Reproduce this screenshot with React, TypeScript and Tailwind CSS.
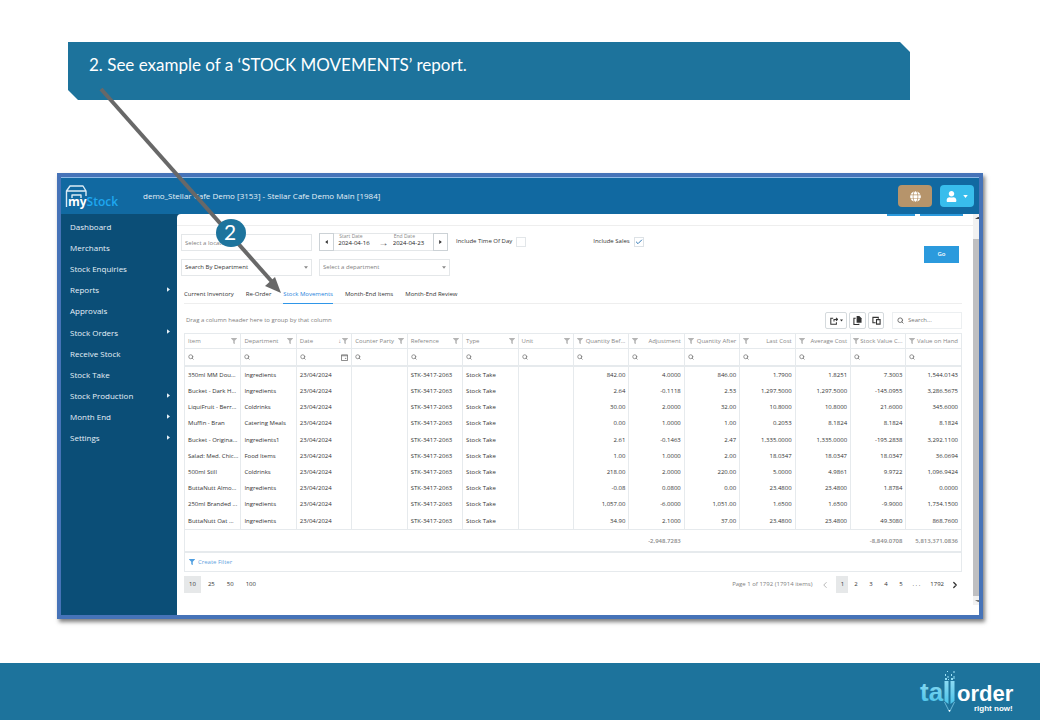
import type { ReactNode } from 'react';
import clsx from 'clsx';
import { FaFilter, FaGlobe, FaUser } from 'react-icons/fa';
import { Check, ChevronLeft, ChevronRight, Search } from 'lucide-react';

interface MenuItem {
  label: string;
  hasChildren?: boolean;
}

const menu: MenuItem[] = [
  { label: 'Dashboard' },
  { label: 'Merchants' },
  { label: 'Stock Enquiries' },
  { label: 'Reports', hasChildren: true },
  { label: 'Approvals' },
  { label: 'Stock Orders', hasChildren: true },
  { label: 'Receive Stock' },
  { label: 'Stock Take' },
  { label: 'Stock Production', hasChildren: true },
  { label: 'Month End', hasChildren: true },
  { label: 'Settings', hasChildren: true },
];

const tabs = ['Current Inventory', 'Re-Order', 'Stock Movements', 'Month-End Items', 'Month-End Review'];

interface Column {
  title: string;
  numeric?: boolean;
  total?: string;
}

const columns: Column[] = [
  { title: 'Item' },
  { title: 'Department' },
  { title: 'Date' },
  { title: 'Counter Party' },
  { title: 'Reference' },
  { title: 'Type' },
  { title: 'Unit' },
  { title: 'Quantity Bef...', numeric: true },
  { title: 'Adjustment', numeric: true, total: '-2,948.7283' },
  { title: 'Quantity After', numeric: true },
  { title: 'Last Cost', numeric: true },
  { title: 'Average Cost', numeric: true },
  { title: 'Stock Value C...', numeric: true, total: '-8,849.0708' },
  { title: 'Value on Hand', numeric: true, total: '5,813,371.0836' },
];

// item, department, then the seven numeric columns
const movements = [
  ['350ml MM Dou...', 'Ingredients', '842.00', '4.0000', '846.00', '1.7900', '1.8251', '7.3003', '1,544.0143'],
  ['Bucket - Dark H...', 'Ingredients', '2.64', '-0.1118', '2.53', '1,297.5000', '1,297.5000', '-145.0955', '3,286.5675'],
  ['LiquiFruit - Berr...', 'Coldrinks', '30.00', '2.0000', '32.00', '10.8000', '10.8000', '21.6000', '345.6000'],
  ['Muffin - Bran', 'Catering Meals', '0.00', '1.0000', '1.00', '0.2053', '8.1824', '8.1824', '8.1824'],
  ['Bucket - Origina...', 'Ingredients1', '2.61', '-0.1463', '2.47', '1,335.0000', '1,335.0000', '-195.2838', '3,292.1100'],
  ['Salad: Med. Chic...', 'Food Items', '1.00', '1.0000', '2.00', '18.0347', '18.0347', '18.0347', '36.0694'],
  ['500ml Still', 'Coldrinks', '218.00', '2.0000', '220.00', '5.0000', '4.9861', '9.9722', '1,096.9424'],
  ['ButtaNutt Almo...', 'Ingredients', '-0.08', '0.0800', '0.00', '23.4800', '23.4800', '1.8784', '0.0000'],
  ['250ml Branded ...', 'Ingredients', '1,057.00', '-6.0000', '1,051.00', '1.6500', '1.6500', '-9.9000', '1,734.1500'],
  ['ButtaNutt Oat ...', 'Ingredients', '34.90', '2.1000', '37.00', '23.4800', '23.4800', '49.3080', '868.7600'],
];

const rows = movements.map(([item, department, ...numbers]) => [
  item,
  department,
  '23/04/2024',
  '',
  'STK-3417-2063',
  'Stock Take',
  '',
  ...numbers,
]);

function Caret({ className }: { className?: string }) {
  return (
    <svg viewBox="0 0 6 4" className={clsx('h-[3px]', className)} fill="currentColor" aria-hidden="true">
      <path d="M0 0h6L3 4z" />
    </svg>
  );
}

function SideCaret({ flip, className }: { flip?: boolean; className?: string }) {
  return (
    <svg viewBox="0 0 4 6" className={clsx('w-[3px]', className)} fill="currentColor" aria-hidden="true">
      <path d={flip ? 'M4 0v6L0 3z' : 'M0 0v6l4-3z'} />
    </svg>
  );
}

function MyStockLogo() {
  return (
    <svg viewBox="0 0 56 28" className="h-7 w-14" role="img" aria-label="myStock">
      <path
        d="M1.500 25V9L5 4h13l3 5v5M1.500 9H21M7 16v-3h9v3"
        fill="none"
        stroke="#dcebf5"
        strokeWidth="1.4"
        strokeLinejoin="round"
      />
      <text x="3" y="24" fontSize="12" fontWeight="700" fontFamily="Open Sans, sans-serif" fill="#ffffff">
        my
        <tspan fill="#1ea7f0" fontWeight="600">Stock</tspan>
      </text>
    </svg>
  );
}

function TallOrderLogo() {
  return (
    <svg viewBox="0 0 100 48" className="h-12 w-[100px]" role="img" aria-label="tallorder right now!">
      <defs>
        <linearGradient id="tall" gradientUnits="userSpaceOnUse" x1="0" y1="4" x2="0" y2="38">
          <stop offset="0" stopColor="#a5e4f7" />
          <stop offset="1" stopColor="#45c1e8" />
        </linearGradient>
      </defs>
      <g fontFamily="Liberation Sans, sans-serif" fontWeight="700">
        <text x="2" y="33" fontSize="26" fill="url(#tall)">ta</text>
        <text x="39" y="33" fontSize="22" fill="#ffffff">order</text>
        <text x="56" y="43" fontSize="8" fill="#ffffff">right now!</text>
      </g>
      <g fill="url(#tall)">
        <path d="M26.500 13h4v23l-4-3zM32.500 13h4v20l-4 3z" />
        <path d="M27 10h2v2h-2zM29.500 8h1v2h-1zM27 6h1v2h-1zM30 11h1v1h-1zM33 10h2v2h-2zM35.500 8h1v3h-1zM33 6h1v2h-1zM35.500 3h1v2h-1zM29 3h1v1h-1z" />
      </g>
      <path d="M26.500 34l5 10 5-10" fill="none" stroke="#7fc9e4" strokeWidth="0.8" />
      <path d="M30.500 42h2l-1 2z" fill="#ffffff" />
    </svg>
  );
}

function PickerSelect({ label, dark }: { label: string; dark?: boolean }) {
  return (
    <div className="relative w-[131px]">
      <select
        aria-label={label}
        className={clsx(
          'block h-[17px] w-full appearance-none border border-[#e4e7e9] bg-white px-[3px] text-[6px]',
          dark ? 'text-[#333]' : 'text-[#808080]',
        )}
      >
        <option>{label}</option>
      </select>
      <Caret className="pointer-events-none absolute top-[7px] right-1 w-1 text-[#8a8a8a]" />
    </div>
  );
}

function DateField({ id, label, value }: { id: string; label: string; value: string }) {
  return (
    <div className="flex w-9 flex-col">
      <label htmlFor={id} className="pl-px text-[5px] leading-[5px] whitespace-nowrap text-[#888]">
        {label}
      </label>
      <input id={id} defaultValue={value} className="h-[9px] w-full text-[6px] text-[#222]" />
    </div>
  );
}

function ToolButton({ label, className, children }: { label: string; className: string; children: ReactNode }) {
  return (
    <button
      type="button"
      aria-label={label}
      className={clsx(
        'flex h-[17px] items-center justify-center gap-0.5 rounded-[2px] border border-[#d5dadd] text-[#333]',
        className,
      )}
    >
      {children}
    </button>
  );
}

function AppHeader() {
  return (
    <header className="flex h-[37px] items-center border-t border-[#8cb9e6] bg-[#1169a1] pr-[5px] pl-1">
      <MyStockLogo />
      <h1 className="ml-[22px] flex-1 text-[8px] font-medium text-[#e6f0f7]">
        demo_Stellar Cafe Demo [3153] - Stellar Cafe Demo Main [1984]
      </h1>
      <button
        type="button"
        aria-label="Language"
        className="mr-2 flex h-[22px] w-[34px] items-center justify-center rounded-sm bg-[#b6946b] text-white"
      >
        <FaGlobe className="h-[11px] w-[11px]" />
      </button>
      <button
        type="button"
        aria-label="Account"
        className="flex h-[22px] w-[34px] items-center justify-center gap-1.5 rounded-sm bg-[#38bdec] text-white"
      >
        <FaUser className="h-[11px] w-[11px]" />
        <Caret className="w-[5px]" />
      </button>
    </header>
  );
}

function Sidebar() {
  return (
    <nav className="w-[116px] shrink-0 bg-[#0b4e77] pt-0.5">
      <ul className="flex h-[233px] flex-col">
        {menu.map((item) => (
          <li key={item.label} className="flex-1">
            <a href="#" className="flex h-full items-center justify-between pr-[7px] pl-[9px] text-[8px] font-medium text-[#e6f0f7]">
              {item.label}
              {item.hasChildren && <SideCaret className="mb-0.5 h-[5px]" />}
            </a>
          </li>
        ))}
      </ul>
    </nav>
  );
}

function Filters() {
  return (
    <form className="flex h-[52px] items-start border-t border-[#eeeeee] pt-1.5 pr-3.5 pl-1">
      <div className="flex flex-1 flex-col gap-2">
        <div className="flex items-center">
          <input
            aria-label="Location"
            placeholder="Select a location"
            className="mt-0.5 h-[17px] w-[131px] border border-[#e4e7e9] px-[3px] text-[6px] placeholder:text-[#808080]"
          />
          <div className="ml-[7px] flex h-[18px] w-[129px] justify-between border-y border-[#e4e7e9]">
            <button type="button" aria-label="Previous period" className="-my-px flex w-[15px] items-center justify-center border border-[#ccd2d6] text-[#333]">
              <SideCaret flip className="h-1" />
            </button>
            <DateField id="start-date" label="Start Date" value="2024-04-16" />
            <span className="self-center text-[10px] leading-none text-[#555]">→</span>
            <DateField id="end-date" label="End Date" value="2024-04-23" />
            <button type="button" aria-label="Next period" className="-my-px flex w-[15px] items-center justify-center border border-[#ccd2d6] text-[#333]">
              <SideCaret className="h-1" />
            </button>
          </div>
          <label className="ml-2 flex items-center gap-1 text-[6px] text-[#333]">
            Include Time Of Day
            <input type="checkbox" className="h-[10px] w-[10px] appearance-none border border-[#e2e6e9]" />
          </label>
          <label className="ml-[67px] flex items-center gap-1 text-[6px] text-[#333]">
            Include Sales
            <span className="grid">
              <input
                type="checkbox"
                defaultChecked
                className="col-start-1 row-start-1 h-[10px] w-[10px] appearance-none border border-[#dde2e6]"
              />
              <Check className="pointer-events-none col-start-1 row-start-1 h-[10px] w-[10px] p-px text-[#337ab7]" strokeWidth={3} />
            </span>
          </label>
        </div>
        <div className="flex gap-[7px]">
          <PickerSelect label="Search By Department" dark />
          <PickerSelect label="Select a department" />
        </div>
      </div>
      <button type="submit" className="mt-3.5 h-[17px] w-[35px] bg-[#2b9add] text-[6px] font-semibold text-white">
        Go
      </button>
    </form>
  );
}

function Tabs() {
  return (
    <div role="tablist" className="mt-2 mr-[11px] ml-[7px] flex h-[19px] gap-3 border-b border-[#eeeeee]">
      {tabs.map((tab) => (
        <button
          key={tab}
          type="button"
          role="tab"
          aria-selected={tab === 'Stock Movements'}
          className={clsx(
            '-mb-px border-b text-[6px]',
            tab === 'Stock Movements' ? 'border-[#2f96e8] text-[#1f83dc]' : 'border-transparent text-[#333]',
          )}
        >
          {tab}
        </button>
      ))}
    </div>
  );
}

function GridToolbar() {
  return (
    <div className="flex h-[29px] items-center pt-1">
      <p className="flex-1 pl-0.5 text-[6px] text-[#808080]">Drag a column header here to group by that column</p>
      <ToolButton label="Export" className="w-[22px]">
        <svg viewBox="0 0 10 10" className="h-2 w-2" fill="none" stroke="currentColor" strokeWidth="1.300" aria-hidden="true">
          <path d="M4 1.500H1v7.500h7V6.500M5 5.500V3h4M7.500 1l2 2-2 2" />
        </svg>
        <Caret className="w-[3px]" />
      </ToolButton>
      <ToolButton label="Expand all" className="ml-0.5 w-[17px]">
        <svg viewBox="0 0 10 10" className="h-[9px] w-[9px]" fill="currentColor" aria-hidden="true">
          <path d="M4 0h3l2.500 2.500V7.500H4z" />
          <path d="M3 2.500H1v7h5.500V8.500" fill="none" stroke="currentColor" strokeWidth="1.200" />
        </svg>
      </ToolButton>
      <ToolButton label="Column chooser" className="ml-0.5 w-4">
        <svg viewBox="0 0 10 10" className="h-[9px] w-[9px]" fill="none" stroke="currentColor" strokeWidth="1.200" aria-hidden="true">
          <path d="M4 7.500H1v-6h6V3M5 4h4v5H5z" />
        </svg>
      </ToolButton>
      <label className="ml-2 flex h-[17px] w-[70px] items-center gap-1 border border-[#eceff1] pl-1 text-[#666]">
        <Search className="h-[7px] w-[7px]" strokeWidth={3} />
        <input type="text" aria-label="Search" placeholder="Search..." className="w-12 text-[6px] placeholder:text-[#777]" />
      </label>
    </div>
  );
}

function StockTable() {
  return (
    <table className="w-full table-fixed border-separate border-spacing-0 border-x border-[#e6eaed] text-[6px] leading-[8px] text-[#333]">
      <thead>
        <tr>
          {columns.map((col, i) => (
            <th key={col.title} className={clsx('h-4 border-y border-[#e6eaed] px-[3px] py-0 font-normal text-[#888]', i > 0 && 'border-l')}>
              <div className={clsx('flex items-center justify-between gap-px whitespace-nowrap', col.numeric && 'flex-row-reverse')}>
                <span>{col.title}</span>
                <span className="flex items-center gap-px">
                  {col.title === 'Date' && <span>↓</span>}
                  <FaFilter className="h-[6px] w-[6px] text-[#b4b4b4]" />
                </span>
              </div>
            </th>
          ))}
        </tr>
        <tr>
          {columns.map((col, i) => (
            <td key={col.title} className={clsx('h-[18px] border-b-2 border-[#e6eaed] px-[3px] py-0', i > 0 && 'border-l')}>
              <label className="flex items-center text-[#777]">
                <Search className="h-[6px] w-[6px] shrink-0" strokeWidth={3} />
                <input type="text" aria-label={`Filter ${col.title}`} className="h-2 w-full min-w-0" />
                {col.title === 'Date' && (
                  <svg viewBox="0 0 8 8" className="h-[7px] w-[7px] shrink-0" fill="none" stroke="currentColor" aria-hidden="true">
                    <path d="M0.500 1h7v6.500h-7zM0.500 2h7M4.500 5h1.500" />
                  </svg>
                )}
              </label>
            </td>
          ))}
        </tr>
      </thead>
      <tbody className="[&>tr:nth-child(5n)>td]:h-[17px]">
        {rows.map((row) => (
          <tr key={row[0]}>
            {row.map((cell, i) => (
              <td
                key={columns[i].title}
                className={clsx(
                  'h-4 overflow-hidden border-[#e6eaed] px-[3px] py-0 whitespace-nowrap',
                  i > 0 && 'border-l',
                  columns[i].numeric && 'text-right',
                )}
              >
                {cell}
              </td>
            ))}
          </tr>
        ))}
      </tbody>
      <tfoot>
        <tr>
          {columns.map((col) => (
            <td key={col.title} className="h-6 border-t border-b-2 border-[#e6eaed] px-[3px] py-0 text-right font-semibold whitespace-nowrap text-[#8a8a8a]">
              {col.total}
            </td>
          ))}
        </tr>
      </tfoot>
    </table>
  );
}

function Pager() {
  return (
    <div className="mt-1 flex h-[17px] items-center justify-between text-[6px] text-[#333]">
      <div className="flex h-full gap-0.5">
        {['10', '25', '50', '100'].map((size) => (
          <button key={size} type="button" className={clsx('h-full px-[5px]', size === '10' && 'bg-[#e6e8e9]')}>
            {size}
          </button>
        ))}
      </div>
      <div className="flex h-full items-center">
        <span className="mr-2 text-[#808080]">Page 1 of 1792 (17914 items)</span>
        <button type="button" aria-label="Previous page" className="mr-1.5 text-[#aaa]">
          <ChevronLeft className="h-2.5 w-2.5" />
        </button>
        {['1', '2', '3', '4', '5'].map((page) => (
          <button key={page} type="button" className={clsx('h-full', page === '1' ? 'w-3 bg-[#e6e8e9]' : 'w-[15px]')}>
            {page}
          </button>
        ))}
        <span className="px-1">. . .</span>
        <button type="button" className="mx-1.5">1792</button>
        <button type="button" aria-label="Next page" className="mr-0.5">
          <ChevronRight className="h-2.5 w-2.5" strokeWidth={3} />
        </button>
      </div>
    </div>
  );
}

function Report() {
  return (
    <main className="min-w-0 flex-1 overflow-hidden rounded-tl-sm bg-white pb-[22px]">
      <div className="flex h-[11px] justify-end gap-[5px] pr-2.5">
        <span className="h-0.5 w-7 bg-[#2b9add]" />
        <span className="h-0.5 w-[43px] bg-[#2b9add]" />
      </div>
      <Filters />
      <Tabs />
      <div className="mr-[11px] ml-[7px]">
        <GridToolbar />
        <StockTable />
        <div className="flex h-[19px] items-center border-x border-b border-[#e6eaed] pl-1">
          <button type="button" className="flex items-center gap-[3px] text-[6px] text-[#5fa3e0]">
            <FaFilter className="h-[6px] w-[6px] text-[#4f9ee0]" />
            Create Filter
          </button>
        </div>
        <Pager />
      </div>
    </main>
  );
}

function ScrollRail() {
  return (
    <div className="flex w-1.5 flex-col items-end bg-[#f1f1f1]" aria-hidden="true">
      <svg viewBox="0 0 6 25" className="h-[25px] w-1.5" fill="#444">
        <path d="M2 5l3-2h1v2z" />
      </svg>
      <div className="w-full flex-1 bg-[#bfbfc1]" />
      <svg viewBox="0 0 6 19" className="h-[19px] w-1.5" fill="#777">
        <path d="M2 4h4v2H5z" />
        <path d="M0 9h6v10H0z" fill="#ffffff" />
      </svg>
    </div>
  );
}

// Numbered callout that points from the caption to the open tab
function Callout() {
  return (
    <div className="pointer-events-none absolute top-[86px] left-24 h-[210px] w-[190px]">
      <svg viewBox="0 0 190 210" className="h-full w-full" aria-hidden="true">
        <path d="M5 3L178 198" stroke="#686868" strokeWidth="4" />
        <path d="M185 207l-16-7 10-9z" fill="#686868" />
        <ellipse cx="135" cy="147" rx="15" ry="14" fill="#1d749d" />
      </svg>
      <span className="absolute top-[132px] left-[119px] w-[30px] text-center font-['Lato',sans-serif] text-[21px] leading-7 text-white">
        2
      </span>
    </div>
  );
}

export default function App() {
  return (
    <div className="relative flex min-h-screen flex-col bg-white font-['Open_Sans','Noto_Sans',sans-serif]">
      <div className="mt-[42px] mr-[130px] ml-[68px] h-[58px] bg-[#1d739c] pt-2.5 pl-[21px] [clip-path:polygon(0_0,calc(100%-10px)_0,100%_10px,100%_100%,10px_100%,0_calc(100%-10px))]">
        <h2 className="font-['Lato',sans-serif] text-[17px] leading-[26px] text-white">
          2. See example of a ‘STOCK MOVEMENTS’ report.
        </h2>
      </div>
      <div className="mx-[57px] mt-[73px] mb-11 border-4 border-[#4673b8] bg-[#0b4e77] shadow-[2px_3px_4px_rgba(0,0,0,0.5)]">
        <AppHeader />
        <div className="flex">
          <Sidebar />
          <Report />
          <ScrollRail />
        </div>
      </div>
      <footer className="mt-auto flex h-[57px] items-center justify-end bg-[#1d739c] pr-[22px]">
        <TallOrderLogo />
      </footer>
      <Callout />
    </div>
  );
}
